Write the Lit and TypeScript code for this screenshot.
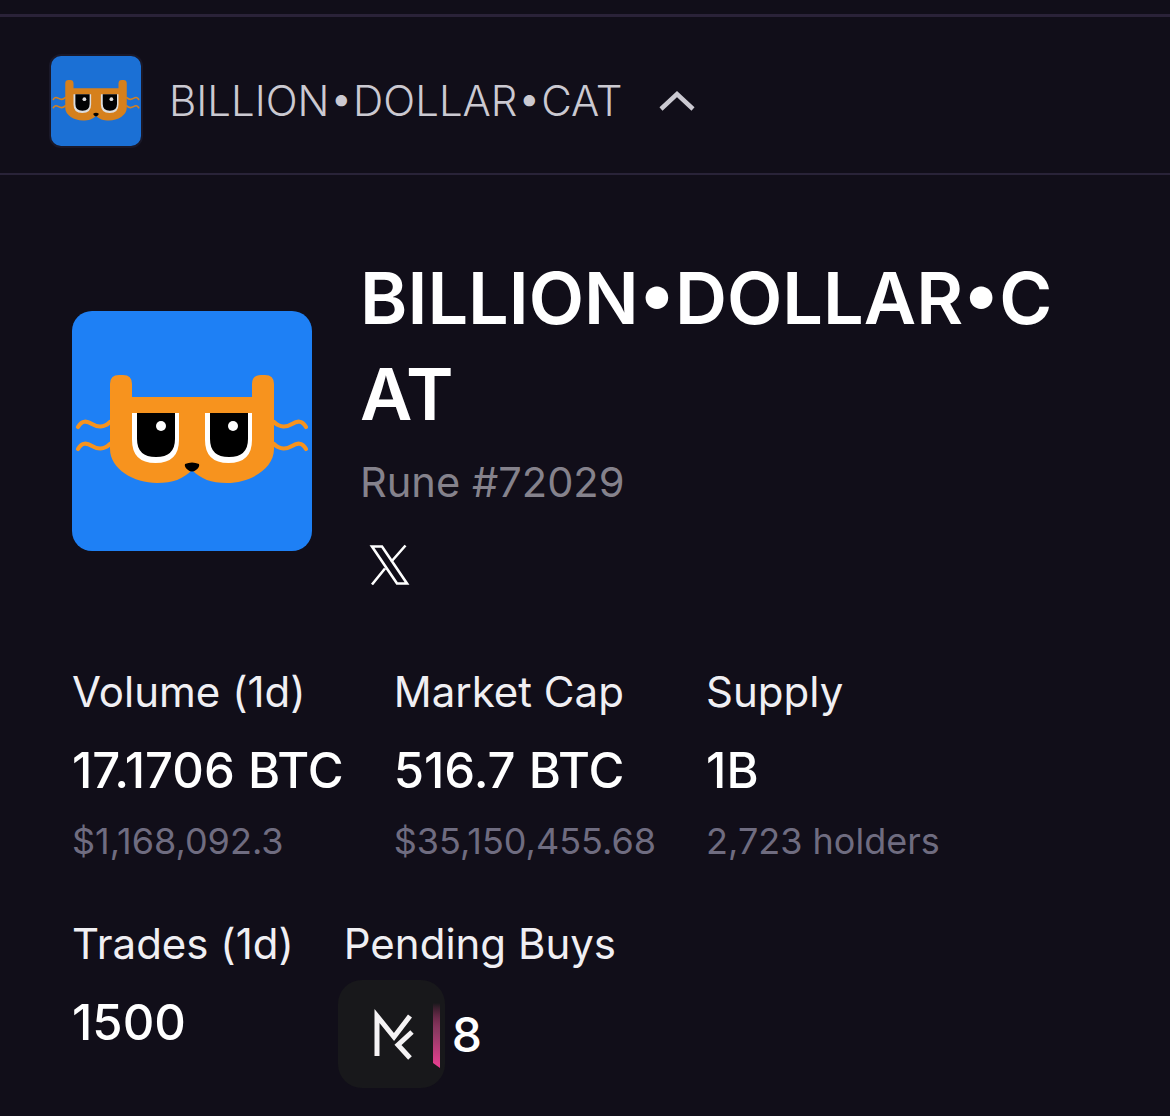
import { LitElement, html, css, svg } from "lit";
import { customElement } from "lit/decorators.js";

const cat = svg`
  <rect width="240" height="240" fill="#1e80f5"/>
  <g fill="none" stroke="#f7931e" stroke-width="4.200" stroke-linecap="round">
    <path d="M6 116c4-7 9-6 14-3s12 4 18-2"/>
    <path d="M6 138c4-7 9-6 14-3s12 4 18-2"/>
    <path d="M234 116c-4-7-9-6-14-3s-12 4-18-2"/>
    <path d="M234 138c-4-7-9-6-14-3s-12 4-18-2"/>
  </g>
  <path fill="#f7931e" d="M38 73q0-9 9-9h4q9 0 9 9v13h120V73q0-9 9-9h4q9 0 9 9v65c0 20-24 34-47 34-16 0-26-4-35-13-9 9-19 13-35 13-23 0-47-14-47-34z"/>
  <path fill="#fff" d="M60 102h47v27q0 23-23.500 23t-23.500-23zM133 102h47v27q0 23-23.500 23t-23.500-23z"/>
  <path fill="#000" d="M65 102h38v26q0 18-19 18t-19-18zM138 102h38v26q0 18-19 18t-19-18z"/>
  <circle cx="89" cy="115" r="5" fill="#fff"/>
  <circle cx="161" cy="115" r="5" fill="#fff"/>
  <path fill="#000" d="M113 153q7-3 14 0q1 3-3 6q-4 3-8 0q-4-3-3-6z"/>
`;

@customElement("app-root")
export class AppRoot extends LitElement {
  static styles = css`
    :host {
      display: block;
      width: 1170px;
      height: 1116px;
      overflow: hidden;
      background: #110e19;
      color: #f4f3f6;
      font-family: Inter, "Liberation Sans", sans-serif;
    }
    .strip {
      height: 14px;
      border-bottom: 3px solid #2a2238;
    }
    .bar {
      height: 158px;
      box-sizing: border-box;
      display: flex;
      align-items: center;
      padding: 11px 0 0 49px;
      border-bottom: 2px solid #292338;
    }
    .mini {
      width: 90px;
      height: 90px;
      border: 2px solid #1a1828;
      border-radius: 12px;
      overflow: hidden;
      display: block;
      flex: none;
    }
    .mini svg {
      display: block;
      width: 90px;
      height: 90px;
      opacity: 0.86;
    }
    .name {
      margin-left: 26px;
      font-size: 42px;
      font-weight: 300;
      color: #cbc9d1;
      line-height: 48px;
      white-space: nowrap;
    }
    .chev {
      margin-left: 36px;
      width: 38px;
      height: 24px;
      fill: none;
      stroke: #cbc9d1;
      stroke-width: 4.500;
    }
    .hero {
      display: flex;
      align-items: center;
      gap: 49px;
      padding: 75px 0 0 72px;
    }
    .art {
      width: 240px;
      height: 240px;
      border-radius: 20px;
      display: block;
      flex: none;
    }
    .title {
      width: 720px;
      margin: 0 0 0 -1px;
      font-size: 72px;
      line-height: 96px;
      font-weight: 600;
      color: #fff;
      word-break: break-all;
    }
    .rune {
      margin-top: 12px;
      margin-left: -1px;
      font-size: 41.600px;
      line-height: 56px;
      color: #85828c;
    }
    .x {
      display: block;
      width: 42px;
      height: 47px;
      margin: 31px 0 24px 8px;
      fill: none;
      stroke: #fff;
      stroke-width: 2.600;
    }
    .stats {
      display: flex;
      flex-wrap: wrap;
      column-gap: 50px;
      row-gap: 0;
      width: 1050px;
      padding: 52px 0 0 72px;
    }
    .stat {
      display: flex;
      flex-direction: column;
    }
    .label {
      font-size: 42px;
      line-height: 56px;
      color: #f0eff3;
      white-space: nowrap;
    }
    .value {
      margin-top: 23px;
      font-size: 49px;
      line-height: 56px;
      font-weight: 500;
      color: #fff;
      white-space: nowrap;
    }
    .sub {
      margin-top: 20px;
      font-size: 36px;
      line-height: 44px;
      color: #6f6c80;
      white-space: nowrap;
    }
    .break {
      flex-basis: 100%;
      height: 53px;
    }
    .pending {
      display: flex;
      align-items: center;
      gap: 7px;
      margin: 8px 0 0 -6px;
    }
    .card {
      width: 107px;
      height: 108px;
      border-radius: 24px;
      background: #18181b;
      display: block;
      flex: none;
    }
    .card svg {
      display: block;
      width: 107px;
      height: 108px;
    }
    .count {
      font-size: 48px;
      font-weight: 500;
      color: #fff;
      line-height: 56px;
      padding-top: 2px;
    }
  `;

  private stat(label: string, value: string, sub?: string) {
    return html`<div class="stat">
      <div class="label">${label}</div>
      <div class="value">${value}</div>
      ${sub ? html`<div class="sub">${sub}</div>` : ""}
    </div>`;
  }

  render() {
    return html`
      <div class="strip"></div>
      <header class="bar">
        <span class="mini"><svg viewBox="0 0 240 240">${cat}</svg></span>
        <span class="name">BILLION•DOLLAR•CAT</span>
        <svg class="chev" viewBox="0 0 38 24"><path d="M3 20L19 5l16 15"/></svg>
      </header>
      <section class="hero">
        <svg class="art" viewBox="0 0 240 240">${cat}</svg>
        <div>
          <h1 class="title">BILLION•DOLLAR•CAT</h1>
          <div class="rune">Rune #72029</div>
          <svg class="x" viewBox="0 0 42 47">
            <path d="M3 5.500h10l25 37H28zM36.500 4.500L22 21M16 27.500L3 43.500"/>
          </svg>
        </div>
      </section>
      <section class="stats">
        ${this.stat("Volume (1d)", "17.1706 BTC", "$1,168,092.3")}
        ${this.stat("Market Cap", "516.7 BTC", "$35,150,455.68")}
        ${this.stat("Supply", "1B", "2,723 holders")}
        <div class="break"></div>
        ${this.stat("Trades (1d)", "1500")}
        <div class="stat">
          <div class="label">Pending Buys</div>
          <div class="pending">
            <span class="card">
              <svg viewBox="0 0 107 108">
                <defs>
                  <linearGradient id="pk" x1="0" y1="0" x2="0" y2="1">
                    <stop offset="0" stop-color="#e83e8c" stop-opacity="0"/>
                    <stop offset="0.45" stop-color="#8c3a63"/>
                    <stop offset="1" stop-color="#ec3f93"/>
                  </linearGradient>
                </defs>
                <path fill="none" stroke="#f5f3f5" stroke-width="5" d="M39 76V36l17 21 16-21M74 52L60 65l12 13"/>
                <path fill="url(#pk)" d="M95 23h7v65l-7-5z"/>
              </svg>
            </span>
            <span class="count">8</span>
          </div>
        </div>
      </section>
    `;
  }
}
